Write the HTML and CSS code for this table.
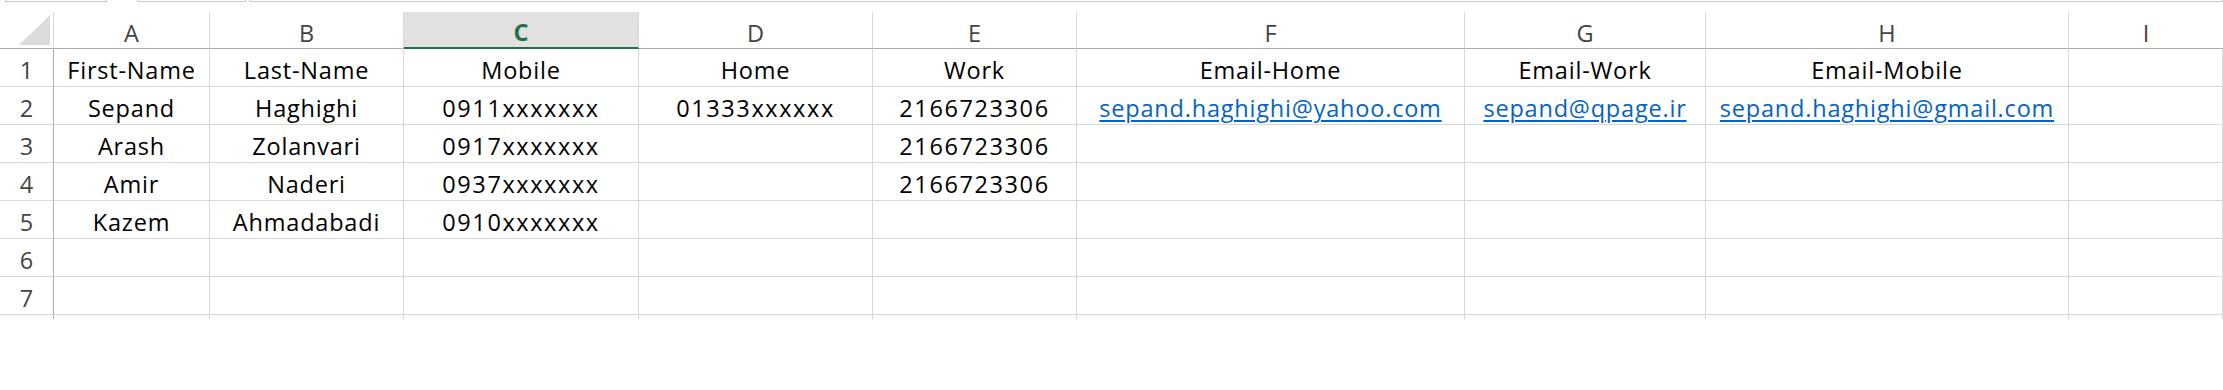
FILE: index.html
```html
<!DOCTYPE html>
<html>
<head>
<meta charset="utf-8">
<link rel="stylesheet" href="styles.css">
</head>
<body>
<div class="topstrip">
  <div class="tbox tb1"></div>
  <div class="tbox tb2"></div>
  <div class="tbox tb3"></div>
</div>
<div class="sheet">
  <div class="corner"><svg class="tri" width="31" height="30" viewBox="0 0 31 30"><polygon points="0,30 31,0 31,30" fill="#dcdcdc"/></svg></div>
  <div class="ch">A</div><div class="ch">B</div><div class="ch sel">C</div><div class="ch">D</div><div class="ch">E</div><div class="ch">F</div><div class="ch">G</div><div class="ch">H</div><div class="ch last">I</div>

  <div class="rh">1</div>
  <div class="c">First-Name</div><div class="c">Last-Name</div><div class="c">Mobile</div><div class="c">Home</div><div class="c">Work</div><div class="c">Email-Home</div><div class="c">Email-Work</div><div class="c">Email-Mobile</div><div class="c"></div>

  <div class="rh">2</div>
  <div class="c">Sepand</div><div class="c">Haghighi</div><div class="c num">0911xxxxxxx</div><div class="c num">01333xxxxxx</div><div class="c num">2166723306</div><div class="c"><a class="lnk">sepand.haghighi@yahoo.com</a></div><div class="c"><a class="lnk">sepand@qpage.ir</a></div><div class="c"><a class="lnk">sepand.haghighi@gmail.com</a></div><div class="c"></div>

  <div class="rh">3</div>
  <div class="c">Arash</div><div class="c">Zolanvari</div><div class="c num">0917xxxxxxx</div><div class="c"></div><div class="c num">2166723306</div><div class="c"></div><div class="c"></div><div class="c"></div><div class="c"></div>

  <div class="rh">4</div>
  <div class="c">Amir</div><div class="c">Naderi</div><div class="c num">0937xxxxxxx</div><div class="c"></div><div class="c num">2166723306</div><div class="c"></div><div class="c"></div><div class="c"></div><div class="c"></div>

  <div class="rh">5</div>
  <div class="c">Kazem</div><div class="c">Ahmadabadi</div><div class="c num">0910xxxxxxx</div><div class="c"></div><div class="c"></div><div class="c"></div><div class="c"></div><div class="c"></div><div class="c"></div>

  <div class="rh">6</div>
  <div class="c"></div><div class="c"></div><div class="c"></div><div class="c"></div><div class="c"></div><div class="c"></div><div class="c"></div><div class="c"></div><div class="c"></div>

  <div class="rh">7</div>
  <div class="c"></div><div class="c"></div><div class="c"></div><div class="c"></div><div class="c"></div><div class="c"></div><div class="c"></div><div class="c"></div><div class="c"></div>

  <div class="tail rtail"></div>
  <div class="tail"></div><div class="tail"></div><div class="tail"></div><div class="tail"></div><div class="tail"></div><div class="tail"></div><div class="tail"></div><div class="tail"></div><div class="tail"></div>
</div>
</body>
</html>
```

FILE: styles.css
```css
html, body {
  margin: 0;
  padding: 0;
  background: #ffffff;
}
body {
  font-family: "Open Sans", Lato, "Liberation Sans", sans-serif;
  font-size: 23.5px;
  letter-spacing: 0.8px;
  color: #000;
  width: 2223px;
  height: 390px;
  overflow: hidden;
}
.topstrip {
  height: 12px;
  display: flex;
  align-items: flex-start;
}
.tbox {
  height: 1px;
  border: 1px solid #c8c8c8;
  border-top: none;
}
.tb1 { margin-left: 5px; width: 100px; }
.tb2 { margin-left: 30px; width: 107px; }
.tb3 { margin-left: 3px; flex: 1; }

.sheet {
  display: grid;
  grid-template-columns: 54px 156px 194px 235px 234px 204px 388px 241px 363px 1fr;
  grid-template-rows: 37px repeat(7, 38px) 4px;
}
.corner {
  border-right: 1px solid #d8d8d8;
  border-bottom: 1px solid #ababab;
  display: flex;
  justify-content: flex-end;
  align-items: flex-end;
  padding: 0 3px 3px 0;
}
.tri { display: block; }
.ch {
  border-right: 1px solid #d8d8d8;
  border-bottom: 1px solid #ababab;
  color: #444444;
  display: flex;
  justify-content: center;
  align-items: flex-end;
  padding-bottom: 0px;
  line-height: 30px;
  letter-spacing: 0;
}
.ch.sel {
  background: #e1e1e1;
  color: #217346;
  font-weight: bold;
  border-bottom: 2px solid #217346;
  padding-bottom: 0;
  line-height: 29px;
}
.ch.last { border-right: none; }
.rh {
  border-right: 1px solid #ababab;
  border-bottom: 1px solid #d8d8d8;
  color: #444444;
  display: flex;
  justify-content: center;
  align-items: flex-end;
  padding-bottom: 1px;
  line-height: 30px;
  letter-spacing: 0;
}
.c {
  border-right: 1px solid #d8d8d8;
  border-bottom: 1px solid #d8d8d8;
  display: flex;
  justify-content: center;
  align-items: flex-end;
  padding-bottom: 1px;
  line-height: 30px;
  white-space: nowrap;
}
.c.num {
  letter-spacing: 1.6px;
}
.lnk {
  color: #0563c1;
  text-decoration: underline;
  text-decoration-thickness: 2px;
  text-underline-offset: 3px;
}
.tail {
  border-right: 1px solid #d8d8d8;
}
.tail.rtail {
  border-right: 1px solid #ababab;
}
```
